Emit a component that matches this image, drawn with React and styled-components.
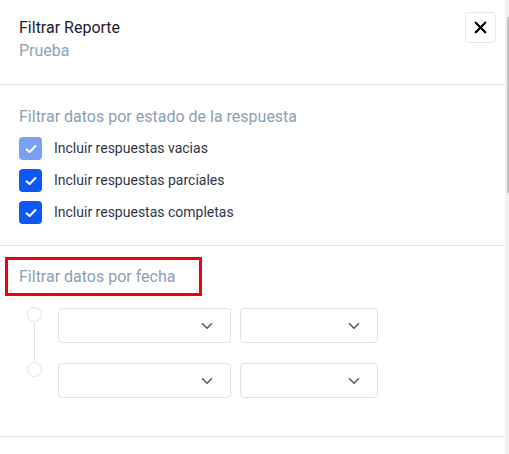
import React from "react";
import styled, { createGlobalStyle } from "styled-components";
import { X, ChevronDown } from "lucide-react";

const Global = createGlobalStyle`
  html, body { margin: 0; padding: 0; background: #fff; }
  body { font-family: Roboto, "Liberation Sans", Arial, sans-serif; }
  * { box-sizing: border-box; }
`;

const Panel = styled.div`
  position: relative;
  width: 509px;
  height: 454px;
  overflow: hidden;
  background: #fff;
`;

const Header = styled.div`
  display: flex;
  justify-content: space-between;
  align-items: flex-start;
  height: 85px;
  padding: 12px 13px 0 19px;
  border-bottom: 1px solid #e4e4e4;
`;

const TitleBlock = styled.div`
  padding-top: 5px;
`;

const Title = styled.div`
  font-size: 16px;
  line-height: 22px;
  font-weight: 400;
  color: #1a202c;
`;

const Subtitle = styled.div`
  margin-top: 1px;
  font-size: 16px;
  line-height: 22px;
  color: #8da3b8;
`;

const CloseButton = styled.button`
  width: 31px;
  height: 31px;
  padding: 0;
  display: flex;
  align-items: center;
  justify-content: center;
  background: #fff;
  border: 1px solid #e4e7eb;
  border-radius: 4px;
  color: #000;
  cursor: pointer;
`;

const Section = styled.div`
  padding: ${(p) => p.$pad};
  border-bottom: 1px solid #e4e4e4;
`;

const SectionTitle = styled.div`
  font-size: 16px;
  line-height: 24px;
  color: #8ba0b4;
`;

const Checks = styled.div`
  display: flex;
  flex-direction: column;
  gap: 9px;
  margin-top: 8px;
`;

const CheckRow = styled.label`
  display: flex;
  align-items: center;
  gap: 12px;
  font-size: 14px;
  color: #2d3748;
  line-height: 23px;
`;

const Box = styled.span`
  width: 23px;
  height: 23px;
  border-radius: 4px;
  background: ${(p) => (p.$light ? "#7aa0f6" : "#0d57f5")};
  display: flex;
  align-items: center;
  justify-content: center;
  flex-shrink: 0;
`;

const Highlight = styled.div`
  margin-left: 5px;
  width: 197px;
  height: 39px;
  border: 3px solid #f0000a;
  padding-left: 11px;
  display: flex;
  align-items: center;
`;

const DateArea = styled.div`
  display: flex;
  margin-top: 11px;
  padding-left: 27px;
  gap: 16px;
`;

const Timeline = styled.div`
  display: flex;
  flex-direction: column;
  align-items: center;
  width: 15px;
`;

const Dot = styled.span`
  width: 15px;
  height: 15px;
  border-radius: 50%;
  border: 1px solid #e2e2e2;
  background: #fff;
`;

const Connector = styled.span`
  width: 1px;
  height: 40px;
  background: #e2e2e2;
`;

const Rows = styled.div`
  display: flex;
  flex-direction: column;
  gap: 20px;
  padding-top: 1px;
`;

const Row = styled.div`
  display: flex;
  gap: 9px;
`;

const Select = styled.div`
  width: ${(p) => p.$w}px;
  height: 35px;
  border: 1px solid #e2e2e2;
  border-radius: 4px;
  display: flex;
  align-items: center;
  justify-content: flex-end;
  padding-right: 14px;
  color: #565b7b;
`;

const ScrollTrack = styled.div`
  position: absolute;
  top: 0;
  right: 0;
  width: 4px;
  height: 100%;
  background: #f1f1f1;
`;

const ScrollThumb = styled.div`
  position: absolute;
  top: 17px;
  right: 0;
  width: 2px;
  height: 176px;
  background: #c3c3c3;
`;

const Check = () => (
  <svg width="12" height="10" viewBox="0 0 12 10" fill="none">
    <path d="M1.5 5.2 4.6 8 10.5 2" stroke="#fff" strokeWidth="2" strokeLinecap="round" strokeLinejoin="round" />
  </svg>
);

const options = [
  { label: "Incluir respuestas vacias", light: true },
  { label: "Incluir respuestas parciales" },
  { label: "Incluir respuestas completas" },
];

export default function App() {
  return (
    <>
      <Global />
      <Panel>
        <Header>
          <TitleBlock>
            <Title>Filtrar Reporte</Title>
            <Subtitle>Prueba</Subtitle>
          </TitleBlock>
          <CloseButton aria-label="Cerrar">
            <X size={19} strokeWidth={2.9} />
          </CloseButton>
        </Header>
        <Section $pad="20px 19px 21px">
          <SectionTitle>Filtrar datos por estado de la respuesta</SectionTitle>
          <Checks>
            {options.map((o) => (
              <CheckRow key={o.label}>
                <Box $light={o.light}>
                  <Check />
                </Box>
                {o.label}
              </CheckRow>
            ))}
          </Checks>
        </Section>
        <Section $pad="11px 0 38px">
          <Highlight>
            <SectionTitle>Filtrar datos por fecha</SectionTitle>
          </Highlight>
          <DateArea>
            <Timeline>
              <Dot />
              <Connector />
              <Dot />
            </Timeline>
            <Rows>
              {[0, 1].map((i) => (
                <Row key={i}>
                  <Select $w={173}>
                    <ChevronDown size={18} strokeWidth={2.2} />
                  </Select>
                  <Select $w={138}>
                    <ChevronDown size={18} strokeWidth={2.2} />
                  </Select>
                </Row>
              ))}
            </Rows>
          </DateArea>
        </Section>
        <ScrollTrack>
          <ScrollThumb />
        </ScrollTrack>
      </Panel>
    </>
  );
}
